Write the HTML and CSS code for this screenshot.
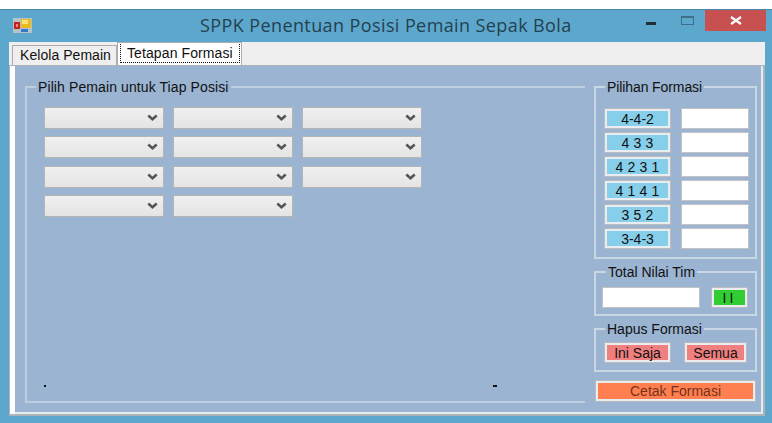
FILE: index.html
```html
<!DOCTYPE html>
<html lang="id">
<head>
    <meta charset="utf-8">
    <title>SPPK Penentuan Posisi Pemain Sepak Bola</title>
    <link rel="stylesheet" href="styles.css">
</head>
<body>
    <!-- Shared arrow for the combo boxes -->
    <svg class="defs" width="0" height="0">
        <symbol id="arrow" viewBox="0 0 10 8">
            <path d="M0.8 1.5 L5 5.2 L9.2 1.5" fill="none" stroke="#555" stroke-width="2.6"/>
        </symbol>
    </svg>

    <div class="window">
        <div class="titlebar">
            <svg class="app-icon" width="19" height="15" viewBox="0 0 19 15">
                <rect x="0" y="0" width="19" height="15" fill="#b4c3c9"/>
                <rect x="1" y="4" width="6" height="7" fill="#c22222"/>
                <rect x="3" y="6" width="2" height="3" fill="#f08a70"/>
                <rect x="8" y="1" width="10" height="9" fill="#edb91c"/>
                <rect x="9" y="2" width="6" height="4" fill="#ffe578"/>
                <rect x="8" y="11" width="7" height="3" fill="#3678d0"/>
            </svg>
            <h1 class="title">SPPK Penentuan Posisi Pemain Sepak Bola</h1>
            <div class="controls">
                <span class="minimize"></span>
                <span class="maximize"></span>
                <span class="close">
                    <svg width="12" height="9" viewBox="0 0 12 9">
                        <path d="M1 1 L11 8 M11 1 L1 8" stroke="#fff" stroke-width="2.2"/>
                    </svg>
                </span>
            </div>
        </div>

        <div class="client">
            <div class="tabs">
                <div class="tab tab-kelola">Kelola Pemain</div>
                <div class="tab active"><span class="focus">Tetapan Formasi</span></div>
            </div>

            <div class="page">
                <fieldset class="group players">
                    <legend class="legend-players">Pilih Pemain untuk Tiap Posisi</legend>
                    <div class="combos">
                        <div class="combo"><svg class="arrow"><use href="#arrow"/></svg></div>
                        <div class="combo"><svg class="arrow"><use href="#arrow"/></svg></div>
                        <div class="combo"><svg class="arrow"><use href="#arrow"/></svg></div>
                        <div class="combo"><svg class="arrow"><use href="#arrow"/></svg></div>
                        <div class="combo"><svg class="arrow"><use href="#arrow"/></svg></div>
                        <div class="combo"><svg class="arrow"><use href="#arrow"/></svg></div>
                        <div class="combo"><svg class="arrow"><use href="#arrow"/></svg></div>
                        <div class="combo"><svg class="arrow"><use href="#arrow"/></svg></div>
                        <div class="combo"><svg class="arrow"><use href="#arrow"/></svg></div>
                        <div class="combo"><svg class="arrow"><use href="#arrow"/></svg></div>
                        <div class="combo"><svg class="arrow"><use href="#arrow"/></svg></div>
                    </div>
                    <div class="marks">
                        <span class="dot"></span>
                        <span class="dash"></span>
                    </div>
                </fieldset>

                <div class="side">
                    <fieldset class="group formations">
                        <legend class="legend-formations">Pilihan Formasi</legend>
                        <div class="formation-grid">
                            <button class="btn blue">4-4-2</button><input class="field" type="text">
                            <button class="btn blue wide">4 3 3</button><input class="field" type="text">
                            <button class="btn blue wide">4 2 3 1</button><input class="field" type="text">
                            <button class="btn blue wide">4 1 4 1</button><input class="field" type="text">
                            <button class="btn blue wide">3 5 2</button><input class="field" type="text">
                            <button class="btn blue">3-4-3</button><input class="field" type="text">
                        </div>
                    </fieldset>

                    <fieldset class="group total">
                        <legend class="legend-total">Total Nilai Tim</legend>
                        <div class="row">
                            <input class="field" type="text">
                            <button class="btn green">II</button>
                        </div>
                    </fieldset>

                    <fieldset class="group remove">
                        <legend class="legend-remove">Hapus Formasi</legend>
                        <div class="row">
                            <button class="btn red this">Ini Saja</button>
                            <button class="btn red all">Semua</button>
                        </div>
                    </fieldset>

                    <button class="btn print">Cetak Formasi</button>
                </div>
            </div>
        </div>
    </div>
</body>
</html>
```

FILE: styles.css
```css
* {
    box-sizing: border-box;
}

body {
    margin: 0;
    padding-top: 9px;
    height: 423px;
    overflow: hidden;
    background: #fff;
    font-family: "Liberation Sans", Arial, sans-serif;
    font-size: 14px;
    color: #111;
}

.defs {
    display: block;
}

/* Window frame */
.window {
    height: 414px;
    padding: 0 7px 7px 9px;
    background: #5da7cd;
    border-top: 1px solid #4787ad;
}

.titlebar {
    display: flex;
    height: 32px;
    padding-left: 4px;
}

.app-icon {
    margin-top: 8px;
}

.title {
    margin: 0 0 0 168px;
    width: 380px;
    line-height: 31px;
    font-family: "Open Sans", sans-serif;
    font-size: 18px;
    font-weight: 400;
    letter-spacing: 0.4px;
    white-space: nowrap;
    color: #24414f;
}

.controls {
    display: flex;
    flex: 1;
    justify-content: flex-end;
    margin-right: -1px;
}

.minimize {
    width: 10px;
    height: 3px;
    margin: 12px 25px 0 0;
    background: #222f35;
}

.maximize {
    width: 13px;
    height: 9px;
    margin: 6px 11px 0 0;
    border: 1px solid #3d6f88;
    border-top-width: 2px;
}

.close {
    display: flex;
    align-items: center;
    justify-content: center;
    width: 61px;
    height: 21px;
    background: #c75050;
}

/* Tabs */
.client {
    height: 374px;
    background: #efefef;
}

.tabs {
    display: flex;
    align-items: flex-end;
    height: 23px;
    padding-left: 3px;
}

.tab {
    height: 20px;
    border: 1px solid #adadad;
    border-bottom: none;
    background: #efefef;
    line-height: 18px;
    white-space: nowrap;
}

.tab-kelola {
    width: 105px;
    padding-left: 7px;
    letter-spacing: 0.05px;
}

.active {
    width: 125px;
    height: 23px;
    padding: 1px 1px 0 2px;
    background: #fff;
}

.focus {
    display: block;
    height: 19px;
    padding-left: 6px;
    border: 1px dotted #111;
    border-top: none;
    line-height: 18px;
    letter-spacing: 0.1px;
}

.page {
    display: flex;
    height: 351px;
    padding: 13px 6px 0 10px;
    background: #9ab4d2;
    border: 1px solid #adb4b8;
    border-width: 1px 2px 2px 1px;
    box-shadow: inset 5px 0 #fff, inset -2px -2px #e4edf2;
}

/* Group boxes */
.group {
    min-width: 0;
    margin: 0;
    padding: 0;
    border: 2px solid #c9d7e5;
}

.group legend {
    height: 16px;
    padding: 0 2px;
    line-height: 16px;
    white-space: nowrap;
}

.players {
    width: 560px;
    height: 324px;
    margin-left: 5px;
    border-right: none;
    border-color: #bfcde0;
}

.legend-players {
    margin-left: 9px;
    letter-spacing: 0.1px;
}

.combos {
    display: grid;
    grid-template-columns: repeat(3, 120px);
    grid-auto-rows: 22px;
    gap: 7.4px 9px;
    padding: 12px 0 0 17px;
}

.combo {
    display: flex;
    justify-content: flex-end;
    align-items: center;
    padding-right: 5px;
    border: 1px solid #b5b5b5;
    background: linear-gradient(#f0f0f0, #e4e4e4);
}

.arrow {
    width: 11px;
    height: 8px;
}

.marks {
    display: flex;
    justify-content: space-between;
    width: 453px;
    margin: 168px 0 0 17px;
}

.dot {
    width: 2px;
    height: 2px;
    background: #111;
}

.dash {
    width: 4px;
    height: 2px;
    background: #111;
}

.side {
    width: 163px;
    margin-left: 9px;
}

.formations {
    height: 180px;
}

.legend-formations {
    margin-left: 9px;
    letter-spacing: -0.1px;
}

.formation-grid {
    display: grid;
    grid-template-columns: 67px 68px;
    grid-auto-rows: 21px;
    gap: 3px 10px;
    padding: 13px 0 0 8px;
}

.field {
    min-width: 0;
    padding: 0 3px;
    border: 1px solid #c3c3c6;
    background: #fff;
    font: inherit;
}

.btn {
    padding: 0;
    border: 3px solid #e9edf0;
    outline: 1px solid #b9bbc0;
    outline-offset: -1px;
    font: inherit;
    font-size: 14px;
    line-height: 14px;
    text-align: center;
    white-space: nowrap;
    color: #111;
}

.blue {
    background: #87ceeb;
}

.wide {
    letter-spacing: 0.2px;
}

.total {
    height: 52px;
    margin-top: 5px;
}

.legend-total {
    margin-left: 10px;
}

.row {
    display: flex;
    height: 21px;
}

.total .row {
    padding-left: 6px;
    margin-top: 7px;
}

.total .field {
    width: 98px;
    margin-right: 11px;
}

.green {
    width: 37px;
    background: #32cd32;
    letter-spacing: 3px;
}

.remove {
    height: 51px;
    margin-top: 5px;
}

.legend-remove {
    margin-left: 9px;
}

.remove .row {
    padding-left: 8px;
    margin-top: 5px;
}

.red {
    background: #f08080;
}

.this {
    width: 67px;
    margin-right: 13px;
}

.all {
    width: 63px;
}

.print {
    display: block;
    width: 161px;
    height: 22px;
    margin: 8px 0 0 1px;
    background: #ff7f50;
    color: #75341b;
}
```
